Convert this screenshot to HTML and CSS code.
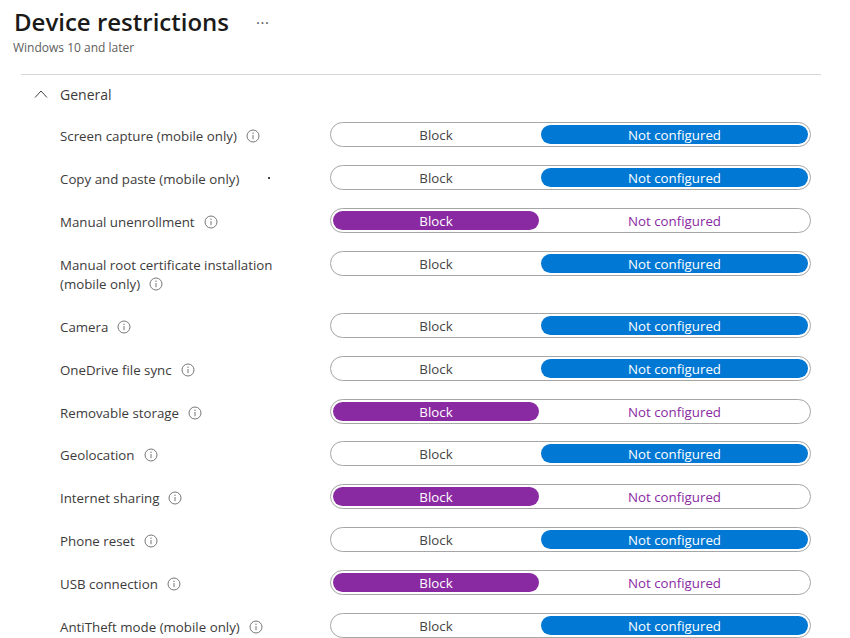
FILE: index.html
```html
<!DOCTYPE html>
<html>

<head lang="en">
    <meta charset="UTF-8">
    <title>Device restrictions</title>
    <link rel="stylesheet" href="styles.css">
</head>

<body>
    <svg class="icon-defs" width="0" height="0">
        <symbol id="info" viewBox="0 0 14 14">
            <circle cx="7" cy="7" r="6" fill="none" stroke="#777" stroke-width="1"></circle>
            <path d="M7 6v4.2" stroke="#777" stroke-width="1"></path>
            <circle cx="7" cy="4.2" r=".7" fill="#777"></circle>
        </symbol>
    </svg>

    <div class="page-header">
        <div class="title-line">
            <h1>Device restrictions</h1>
            <span class="more">...</span>
        </div>
        <div class="subtitle">Windows 10 and later</div>
    </div>

    <div class="section">
        <div class="section-title">
            <svg class="chevron" width="14" height="8" viewBox="0 0 14 8">
                <path d="M1 7.5L7 1l6 6.5" fill="none" stroke="#444" stroke-width="1"></path>
            </svg>
            <span>General</span>
        </div>

        <div class="row">
            <div class="label">Screen capture (mobile only)<svg class="info"><use href="#info"></use></svg></div>
            <div class="toggle"><span class="opt">Block</span><span class="opt on">Not configured</span></div>
        </div>
        <div class="row">
            <div class="label">Copy and paste (mobile only)<span class="dot"></span></div>
            <div class="toggle"><span class="opt">Block</span><span class="opt on">Not configured</span></div>
        </div>
        <div class="row">
            <div class="label">Manual unenrollment<svg class="info"><use href="#info"></use></svg></div>
            <div class="toggle blocked"><span class="opt on">Block</span><span class="opt">Not configured</span></div>
        </div>
        <div class="row tall">
            <div class="label">Manual root certificate installation<br>(mobile only)<svg class="info"><use href="#info"></use></svg></div>
            <div class="toggle"><span class="opt">Block</span><span class="opt on">Not configured</span></div>
        </div>
        <div class="row">
            <div class="label">Camera<svg class="info"><use href="#info"></use></svg></div>
            <div class="toggle"><span class="opt">Block</span><span class="opt on">Not configured</span></div>
        </div>
        <div class="row">
            <div class="label">OneDrive file sync<svg class="info"><use href="#info"></use></svg></div>
            <div class="toggle"><span class="opt">Block</span><span class="opt on">Not configured</span></div>
        </div>
        <div class="row">
            <div class="label">Removable storage<svg class="info"><use href="#info"></use></svg></div>
            <div class="toggle blocked"><span class="opt on">Block</span><span class="opt">Not configured</span></div>
        </div>
        <div class="row">
            <div class="label">Geolocation<svg class="info"><use href="#info"></use></svg></div>
            <div class="toggle"><span class="opt">Block</span><span class="opt on">Not configured</span></div>
        </div>
        <div class="row">
            <div class="label">Internet sharing<svg class="info"><use href="#info"></use></svg></div>
            <div class="toggle blocked"><span class="opt on">Block</span><span class="opt">Not configured</span></div>
        </div>
        <div class="row">
            <div class="label">Phone reset<svg class="info"><use href="#info"></use></svg></div>
            <div class="toggle"><span class="opt">Block</span><span class="opt on">Not configured</span></div>
        </div>
        <div class="row">
            <div class="label">USB connection<svg class="info"><use href="#info"></use></svg></div>
            <div class="toggle blocked"><span class="opt on">Block</span><span class="opt">Not configured</span></div>
        </div>
        <div class="row">
            <div class="label">AntiTheft mode (mobile only)<svg class="info"><use href="#info"></use></svg></div>
            <div class="toggle"><span class="opt">Block</span><span class="opt on">Not configured</span></div>
        </div>
    </div>
</body>

</html>
```

FILE: styles.css
```css
html,
body {
    height: 638px;
    overflow: hidden;
}

body {
    margin: 0;
    background: #ffffff;
    color: #3c3b3a;
    font-family: "Open Sans", "Liberation Sans", sans-serif;
    font-size: 13.3px;
}

.icon-defs {
    position: absolute;
}

.page-header {
    padding: 5px 0 0 14px;
}

.title-line {
    display: flex;
    align-items: center;
    height: 33px;
}

h1 {
    margin: 0;
    font-size: 24px;
    font-weight: 600;
    color: #1b1a19;
    width: 241px;
    white-space: nowrap;
}

.more {
    font-size: 15px;
    line-height: 13px;
    letter-spacing: .5px;
    color: #555;
    margin: 0 0 7px 1px;
}

.subtitle {
    margin: 1px 0 0 -1px;
    font-size: 12px;
    line-height: 17px;
    color: #605e5c;
}

.section {
    margin: 18px 29px 0 21px;
    border-top: 1px solid #d8d8d8;
}

.section-title {
    display: flex;
    align-items: center;
    height: 38px;
    padding-left: 13px;
    font-size: 14px;
}

.chevron {
    margin-right: 12px;
}

.row {
    display: flex;
    height: 42.9px;
    padding-left: 39px;
}

.row:nth-child(2) {
    margin-top: 9.1px;
}

.row.tall {
    height: 62px;
}

.label {
    width: 270px;
    line-height: 19px;
    padding-top: 5px;
    white-space: nowrap;
}

.info {
    width: 14px;
    height: 14px;
    margin-left: 9px;
    vertical-align: -2px;
}

.dot {
    display: inline-block;
    width: 2px;
    height: 2px;
    margin: 0 0 5px 29px;
    background: #444;
    vertical-align: middle;
}

.toggle {
    display: flex;
    box-sizing: border-box;
    width: 481px;
    height: 25px;
    padding: 2px;
    gap: 2px;
    border: 1px solid #a6a6a6;
    border-radius: 13px;
}

.opt {
    flex: 0 0 206px;
    height: 19px;
    line-height: 20px;
    text-align: center;
    color: #444;
}

.opt:last-child {
    flex: 0 0 267px;
}

.opt.on {
    border-radius: 10px;
    background: #0078d4;
    color: #ffffff;
}

.blocked .opt {
    color: #8a2aa2;
}

.blocked .opt.on {
    background: #8a2aa2;
    color: #ffffff;
}
```
